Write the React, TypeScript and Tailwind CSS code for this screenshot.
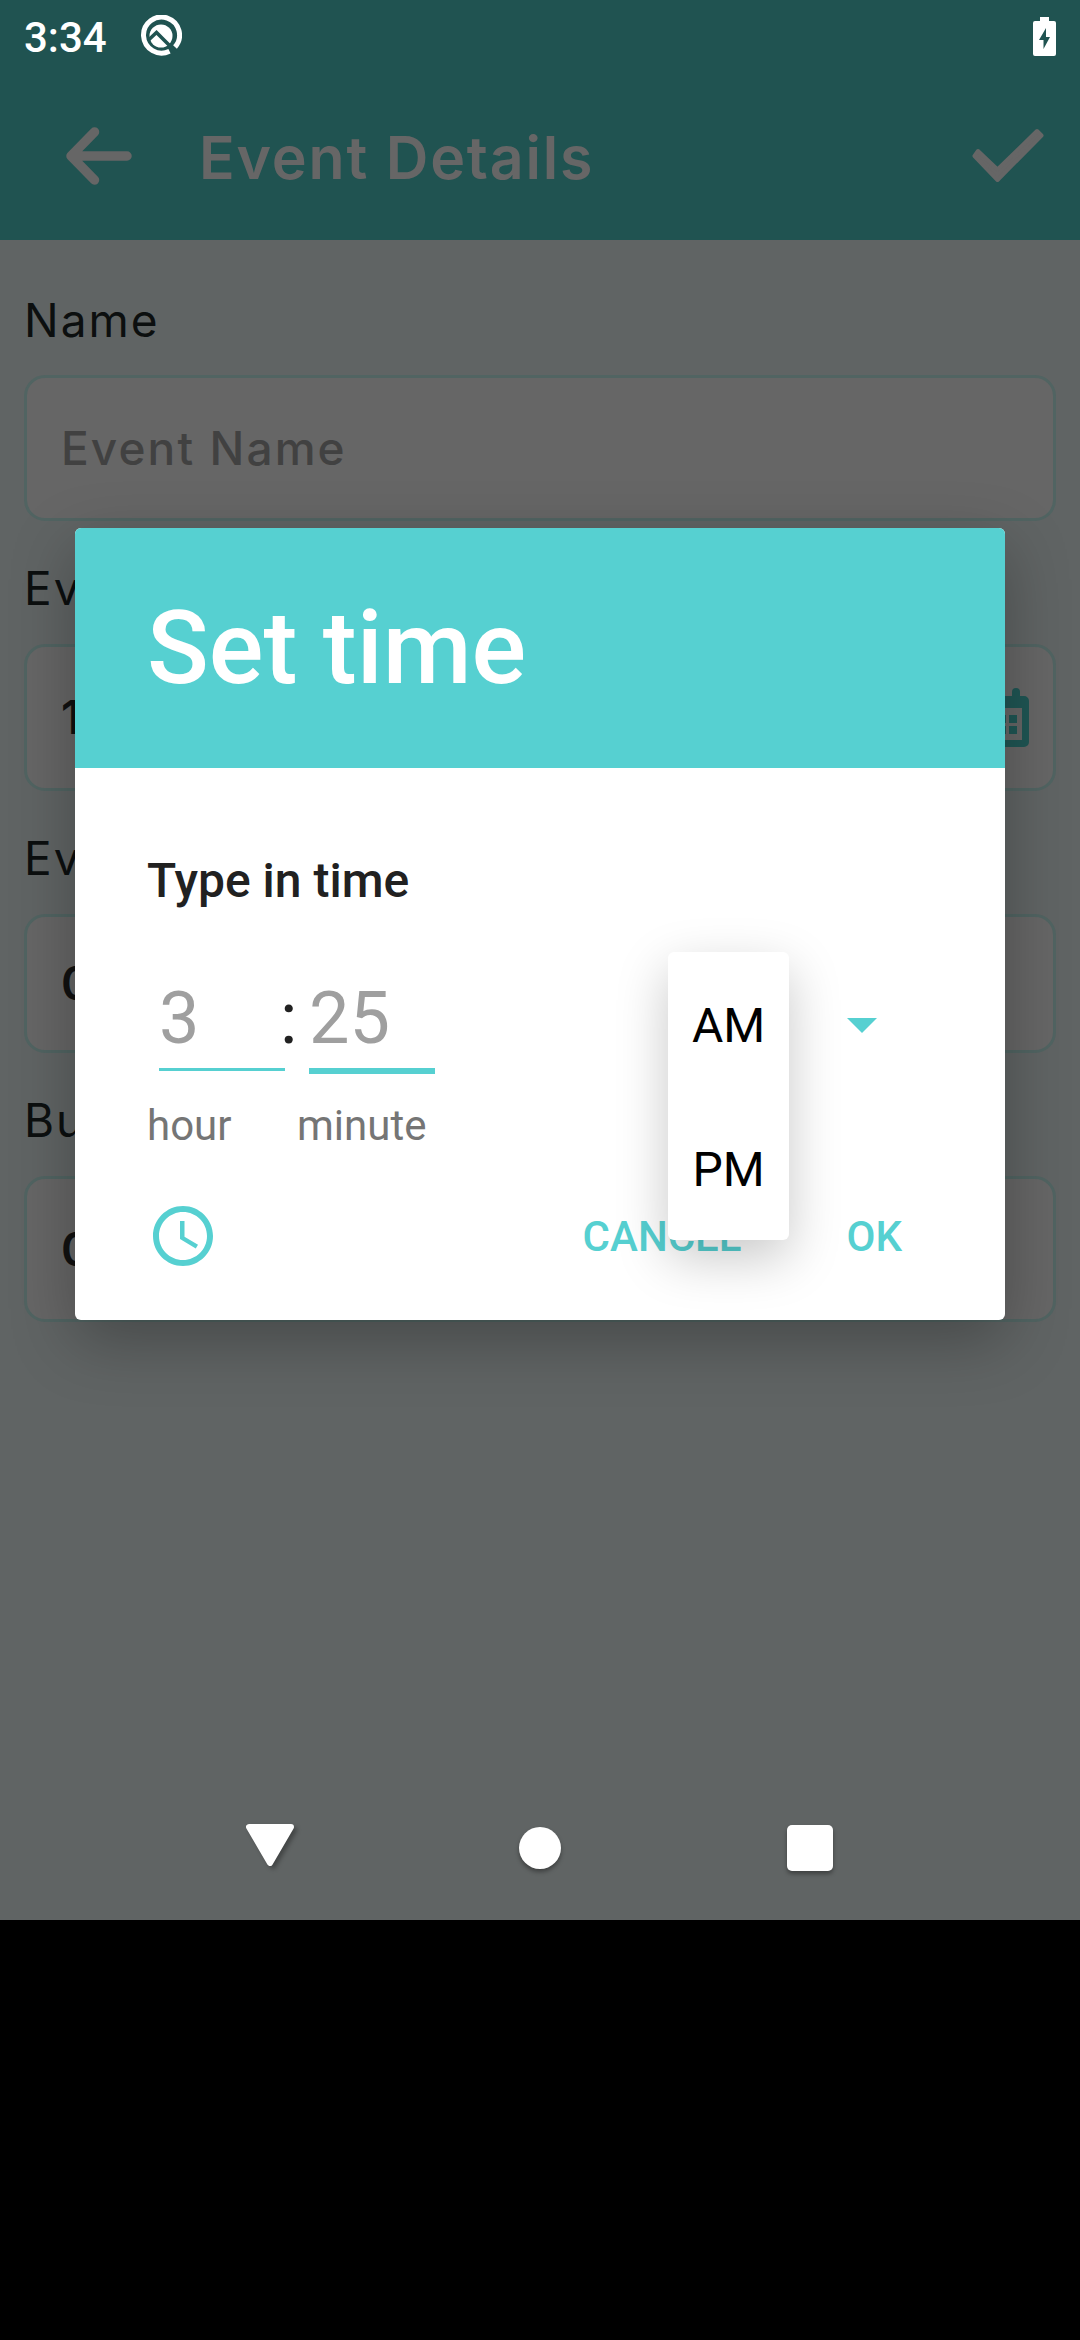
import React from "react";
import { MdAccessTime, MdArrowDropDown } from "react-icons/md";

function StatusBar() {
  return (
    <div className="flex h-[72px] items-center pr-6 pl-6 text-white">
      <span className="mt-[3px] w-[116px] font-['Roboto'] text-[42px] leading-[48px] font-medium whitespace-nowrap">3:34</span>
      <svg className="h-[42px] w-[42px]" viewBox="0 0 42 42" fill="none">
        <path d="M29.5 36.2A18 18 0 1 1 35 32" stroke="white" strokeWidth="5" />
        <circle cx="21" cy="21" r="11.5" fill="white" />
        <path d="M8 25.500L16.500 17.500L36 37" stroke="#205351" strokeWidth="3.6" />
      </svg>
      <svg className="ml-auto h-[39px] w-[23px]" viewBox="0 0 23 39">
        <path fill="white" fillRule="evenodd" d="M7 0h9v4h5a2 2 0 0 1 2 2v31a2 2 0 0 1-2 2H2a2 2 0 0 1-2-2V6a2 2 0 0 1 2-2h5zM13 11L6 23h4.500v9L17 20h-4z" />
      </svg>
    </div>
  );
}

function AppBar() {
  return (
    <div className="flex h-[168px] items-start pr-9 pl-[66px]">
      <svg className="mt-[55px] h-[58px] w-[66px]" viewBox="0 0 66 58" fill="none" stroke="#666" strokeWidth="9.500" strokeLinecap="round" strokeLinejoin="round">
        <path d="M61 29H6M28.500 5L5 29L28.500 53" />
      </svg>
      <span className="mt-[51px] ml-[67px] text-[59px] leading-[70px] font-semibold tracking-[1.8px] whitespace-nowrap text-[#666]">Event Details</span>
      <svg className="mt-[56px] ml-auto h-[56px] w-[72px]" viewBox="0 0 72 56">
        <path d="M6 23L25.500 41.500L65 3L69.500 7.500L25.500 52L2.500 28Z" fill="#666" stroke="#666" strokeWidth="4" strokeLinejoin="round" />
      </svg>
    </div>
  );
}

function Label({ children }: { children: string }) {
  return <div className="text-[46px] leading-[56px] tracking-[2px] whitespace-nowrap text-[#0c0f0f]">{children}</div>;
}

const box = "flex items-center rounded-[21px] border-[3px] border-[#516462] bg-[#666] pl-[34px] text-[46px]";

function CalendarIcon() {
  return (
    <svg className="mr-6 ml-auto h-[60px] w-[54px]" viewBox="0 0 54 60" fill="#1f5654">
      <path fillRule="evenodd" d="M5 8h4V4a4 4 0 0 1 8 0v4h20V4a4 4 0 0 1 8 0v4h4a5 5 0 0 1 5 5v41a5 5 0 0 1-5 5H5a5 5 0 0 1-5-5V13a5 5 0 0 1 5-5zM7 20v32h40V20z" />
      <path d="M12 27h8v8h-8zM23 27h8v8h-8zM34 27h8v8h-8zM12 38h8v8h-8zM23 38h8v8h-8zM34 38h8v8h-8z" />
    </svg>
  );
}

function Form() {
  return (
    <div className="px-6 pt-[52px]">
      <Label>Name</Label>
      <div className={box + " mt-[27px] h-[146px] font-medium text-[#414141]"}>
        <span className="tracking-[2.1px]">Event Name</span>
      </div>
      <div className="h-[39px]" />
      <Label>Event Date</Label>
      <div className={box + " mt-[28px] h-[147px] font-semibold text-[#111]"}>
        <span>10/14/2020</span>
        <CalendarIcon />
      </div>
      <div className="h-[39px]" />
      <Label>Event Time</Label>
      <div className={box + " mt-[28px] h-[139px] font-semibold text-[#111]"}>
        <span>03:25 PM</span>
      </div>
      <div className="h-[39px]" />
      <Label>Budget</Label>
      <div className={box + " mt-[28px] h-[146px] font-semibold text-[#111]"}>
        <span>0</span>
      </div>
    </div>
  );
}

function NavBar() {
  return (
    <div className="grid h-[144px] grid-cols-3 items-center justify-items-center px-[135px]">
      <svg className="h-[60px] w-[60px] drop-shadow-[3px_3px_2px_rgba(0,0,0,0.3)]" viewBox="0 0 60 60">
        <path d="M9 9H51L30 45Z" fill="white" stroke="white" strokeWidth="6" strokeLinejoin="round" />
      </svg>
      <div className="h-[42px] w-[42px] rounded-full bg-white shadow-[0_3px_4px_rgba(0,0,0,0.35)]" />
      <div className="h-[46px] w-[46px] rounded-[5px] bg-white shadow-[0_3px_4px_rgba(0,0,0,0.35)]" />
    </div>
  );
}

function TimeField({ value, label, active }: { value: string; label: string; active?: boolean }) {
  return (
    <div className="w-[150px] shrink-0">
      <div className="ml-3 h-[98px] w-[126px] pt-[7px] text-[72px] leading-[84px] text-[#9f9f9f]">{value}</div>
      <div className="ml-3 h-[6px] w-[126px]">
        <div className={active ? "h-[6px] bg-[#56d0d1]" : "h-[3px] bg-[#56d0d1]"} />
      </div>
      <div className="mt-[28px] text-[42px] leading-[48px] text-[#757575]">{label}</div>
    </div>
  );
}

function TimeDialog() {
  return (
    <div className="absolute top-[528px] left-[75px] h-[792px] w-[930px] rounded-[6px] bg-white font-['Roboto'] shadow-[0_20px_64px_rgba(0,0,0,0.28)]">
      <div className="flex h-[240px] items-center rounded-t-[6px] bg-[#56d0d1] pl-[72px] text-[102px] leading-[120px] font-medium text-white">Set time</div>
      <div className="px-[72px] pt-[85px]">
        <div className="text-[48px] leading-[56px] font-medium text-[#212121]">Type in time</div>
        <div className="mt-[61px] flex">
          <TimeField value="3" label="hour" />
          <div className="relative w-0">
            <span className="absolute top-[7px] -left-[17px] text-[72px] leading-[84px] text-[#212121]">:</span>
          </div>
          <TimeField value="25" label="minute" active />
          <MdArrowDropDown className="mt-[18px] mr-[35px] ml-auto h-[72px] w-[72px] text-[#56d0d1]" />
        </div>
        <div className="mt-[50px] flex items-center text-[42px] leading-[48px] font-medium text-[#56d0d1]">
          <MdAccessTime className="h-[72px] w-[72px]" />
          <span className="mt-[2px] ml-auto">CANCEL</span>
          <span className="mt-[2px] mr-[31px] ml-[105px]">OK</span>
        </div>
      </div>
      <div className="absolute top-[424px] left-[593px] flex h-[288px] w-[121px] flex-col rounded-[6px] bg-white text-[48px] text-black shadow-[0_18px_52px_rgba(0,0,0,0.22)]">
        <div className="flex h-[144px] items-center justify-center pt-[3px]">AM</div>
        <div className="flex h-[144px] items-center justify-center pt-[3px]">PM</div>
      </div>
    </div>
  );
}

export default function App() {
  return (
    <div className="h-[2340px] w-[1080px] overflow-hidden bg-black font-['Inter',sans-serif]">
      <div className="relative flex h-[1920px] flex-col bg-[#606464]">
        <div className="h-[240px] bg-[#205351]">
          <StatusBar />
          <AppBar />
        </div>
        <Form />
        <div className="mt-auto">
          <NavBar />
        </div>
        <TimeDialog />
      </div>
    </div>
  );
}
